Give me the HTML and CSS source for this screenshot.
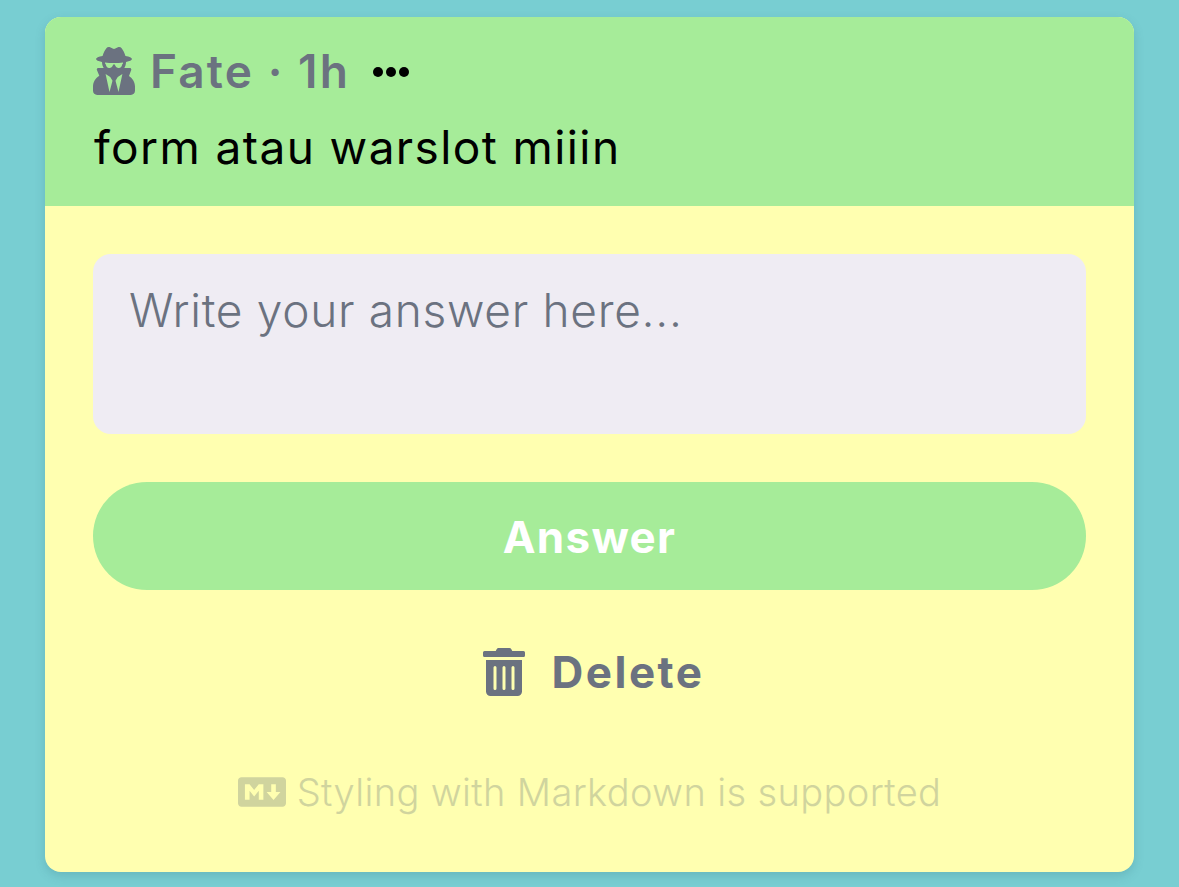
FILE: index.html
```html
<!DOCTYPE html>
<html lang="en">
<head>
<meta charset="utf-8">
<title>Question</title>
<link rel="stylesheet" href="styles.css">
</head>
<body>
<main class="card">
  <header class="head">
    <div class="meta">
      <svg class="spy" viewBox="0 0 448 512" aria-hidden="true">
        <path d="M383.900 308.300l23.900-62.600c4-10.500-3.700-21.700-15-21.700h-58.500c11-18.900 17.800-40.600 17.800-64v-.3c39.200-7.800 64-19.100 64-31.700 0-13.300-27.300-25.100-70.100-33-9.200-32.800-27-65.800-40.600-82.800-9.500-11.900-25.900-15.600-39.500-8.800l-27.600 13.800c-9 4.500-19.600 4.500-28.600 0L182.100 3.400c-13.600-6.800-30-3.100-39.500 8.800-13.500 17-31.400 50-40.600 82.800-42.700 7.900-70 19.700-70 33 0 12.600 24.800 23.900 64 31.700v.3c0 23.400 6.800 45.100 17.800 64H56.300c-11.500 0-19.200 11.700-14.700 22.300l25.800 60.200C27.300 329.800 0 372.700 0 422.400v44.800C0 491.900 20.100 512 44.800 512h358.400c24.700 0 44.800-20.100 44.800-44.800v-44.800c0-48.400-25.800-90.400-64.100-114.100zM176 480l-41.600-192 49.600 32 24 40-32 120zm96 0l-32-120 24-40 49.600-32L272 480zm41.700-298.500c-3.900 11.900-7 24.600-16.500 33.400-10.100 9.300-48 22.400-64-25-2.800-8.400-15.400-8.400-18.300 0-17 50.200-56 32.400-64 25-9.500-8.800-12.700-21.500-16.500-33.400-.8-2.500-6.300-5.700-6.300-5.800v-10.800c28.300 3.600 61 5.800 96 5.800s67.700-2.200 96-5.800v10.800c-.1.100-5.600 3.200-6.400 5.800z"/>
      </svg>
      <span class="author">Fate · 1h</span>
      <span class="more" aria-label="More"><i></i><i></i><i></i></span>
    </div>
    <p class="question">form atau warslot miiin</p>
  </header>
  <section class="body">
    <div class="input">Write your answer here...</div>
    <div class="answer">Answer</div>
    <div class="delete">
      <svg class="trash" viewBox="0 0 448 512" aria-hidden="true">
        <path d="M32 464a48 48 0 0 0 48 48h288a48 48 0 0 0 48-48V128H32zm272-256a16 16 0 0 1 32 0v224a16 16 0 0 1-32 0zm-96 0a16 16 0 0 1 32 0v224a16 16 0 0 1-32 0zm-96 0a16 16 0 0 1 32 0v224a16 16 0 0 1-32 0zM432 32H312l-9.400-18.700A24 24 0 0 0 281.100 0H166.800a23.720 23.720 0 0 0-21.400 13.300L136 32H16A16 16 0 0 0 0 48v32a16 16 0 0 0 16 16h416a16 16 0 0 0 16-16V48a16 16 0 0 0-16-16z"/>
      </svg>
      <span>Delete</span>
    </div>
    <div class="hint">
      <svg class="md" viewBox="0 59 640 394" aria-hidden="true">
        <path d="M593.800 59.100H46.200C20.700 59.100 0 79.800 0 105.200v301.500c0 25.500 20.700 46.200 46.200 46.200h547.700c25.500 0 46.200-20.700 46.100-46.100V105.200c0-25.400-20.700-46.100-46.200-46.100zM338.500 360.600H277v-120l-61.500 76.900-61.500-76.900v120H92.300V151.400h61.500l61.500 76.900 61.500-76.900h61.500v209.200zm135.300 3.100L381.500 256H443V151.400h61.500V256H566z"/>
      </svg>
      <span>Styling with Markdown is supported</span>
    </div>
  </section>
</main>
</body>
</html>
```

FILE: styles.css
```css
* { box-sizing: border-box; }

html, body { height: 100%; }

body {
  margin: 0;
  padding: 17px 45px 15px;
  background: #78ced2;
  font-family: "Inter", "Liberation Sans", sans-serif;
  overflow: hidden;
}

.card {
  height: 855px;
  border-radius: 16px;
  overflow: hidden;
  background: #ffffb0;
  display: flex;
  flex-direction: column;
  box-shadow: 0 4px 10px rgba(60, 120, 130, .25);
}

.head {
  height: 189px;
  background: #a6ec99;
  padding: 29px 48px 0;
}

.meta {
  display: flex;
  align-items: center;
  height: 50px;
}

.spy {
  width: 42px;
  height: 48px;
  fill: #6b7280;
  flex: none;
}

.author {
  margin-left: 15px;
  font-size: 46px;
  font-weight: 600;
  color: #6b7280;
  line-height: 50px;
  letter-spacing: 2.100px;
}

.more {
  margin-left: 23px;
  display: flex;
  gap: 3px;
  margin-top: 2px;
}

.more i {
  width: 10px;
  height: 10px;
  border-radius: 50%;
  background: #000;
}

.question {
  margin: 25px 0 0 1px;
  font-size: 46px;
  line-height: 52px;
  letter-spacing: 1.400px;
  color: #000;
  white-space: nowrap;
}

.body {
  flex: 1;
  padding: 48px 48px 0;
  display: flex;
  flex-direction: column;
}

.input {
  height: 180px;
  border-radius: 18px;
  background: #efecf3;
  padding: 30px 36px;
  font-size: 46px;
  font-weight: 300;
  line-height: 52px;
  letter-spacing: .700px;
  color: #6b7280;
  white-space: nowrap;
}

.answer {
  margin-top: 48px;
  height: 108px;
  border-radius: 54px;
  background: #a6ec99;
  color: #fff;
  font-size: 44px;
  font-weight: 700;
  letter-spacing: 1.300px;
  display: flex;
  align-items: center;
  justify-content: center;
  padding-top: 2px;
}

.delete {
  margin-top: 56px;
  height: 52px;
  display: flex;
  align-items: center;
  justify-content: center;
  gap: 26px;
  color: #6b7280;
  font-size: 44px;
  font-weight: 700;
  letter-spacing: 2.500px;
  padding-left: 9px;
}

.trash {
  width: 42px;
  height: 48px;
  fill: #6b7280;
  flex: none;
}

.hint {
  margin-top: 71px;
  height: 46px;
  display: flex;
  align-items: center;
  justify-content: center;
  gap: 11px;
  color: #d0d49e;
  font-size: 38px;
  font-weight: 300;
  letter-spacing: .370px;
  white-space: nowrap;
}

.md {
  width: 48px;
  height: 30px;
  fill: #d0d49e;
  flex: none;
}
```
